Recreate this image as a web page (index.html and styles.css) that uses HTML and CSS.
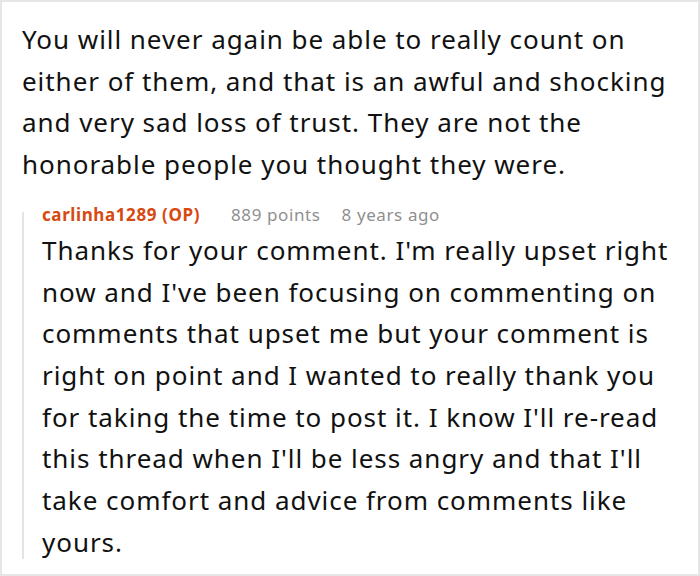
FILE: index.html
```html
<!DOCTYPE html>
<html lang="en">
<head>
<meta charset="utf-8">
<link rel="stylesheet" href="styles.css">
</head>
<body>
<div class="frame">
  <p class="comment-text">You will never again be able to really count on either of them, and that is an awful and shocking and very sad loss of trust. They are not the honorable people you thought they were.</p>
  <div class="reply">
    <div class="thread-line"></div>
    <div class="reply-body">
      <div class="meta">
        <span class="author">carlinha1289 (OP)</span>
        <span class="points">889 points</span>
        <span class="time">8 years ago</span>
      </div>
      <p class="comment-text reply-text">Thanks for your comment. I'm really upset right now and I've been focusing on commenting on comments that upset me but your comment is right on point and I wanted to really thank you for taking the time to post it. I know I'll re-read this thread when I'll be less angry and that I'll take comfort and advice from comments like yours.</p>
    </div>
  </div>
</div>
</body>
</html>
```

FILE: styles.css
```css
html, body {
  margin: 0;
  padding: 0;
  background: #fff;
}
.frame {
  box-sizing: border-box;
  width: 700px;
  height: 576px;
  border: 2px solid #e6e6e6;
  padding: 17px 10px 0 20px;
  font-family: "Noto Sans", sans-serif;
  color: #111;
  overflow: hidden;
}
.comment-text {
  margin: 0;
  font-size: 26px;
  line-height: 41.7px;
  letter-spacing: 0.95px;
}
.reply {
  display: flex;
  margin-top: 17.6px;
}
.thread-line {
  flex: none;
  width: 2px;
  background: #e4e4e4;
  margin-top: 9px;
  margin-bottom: 5px;
}
.reply-body {
  margin-left: 18px;
  min-width: 0;
}
.meta {
  display: flex;
  font-size: 17px;
  line-height: 24px;
  letter-spacing: 0.6px;
}
.author {
  color: #d64a12;
  font-weight: 700;
  margin-right: 31px;
}
.points, .time {
  color: #8f8f8f;
}
.points {
  margin-right: 21px;
}
.reply-text {
  margin-top: 2.5px;
}
```
